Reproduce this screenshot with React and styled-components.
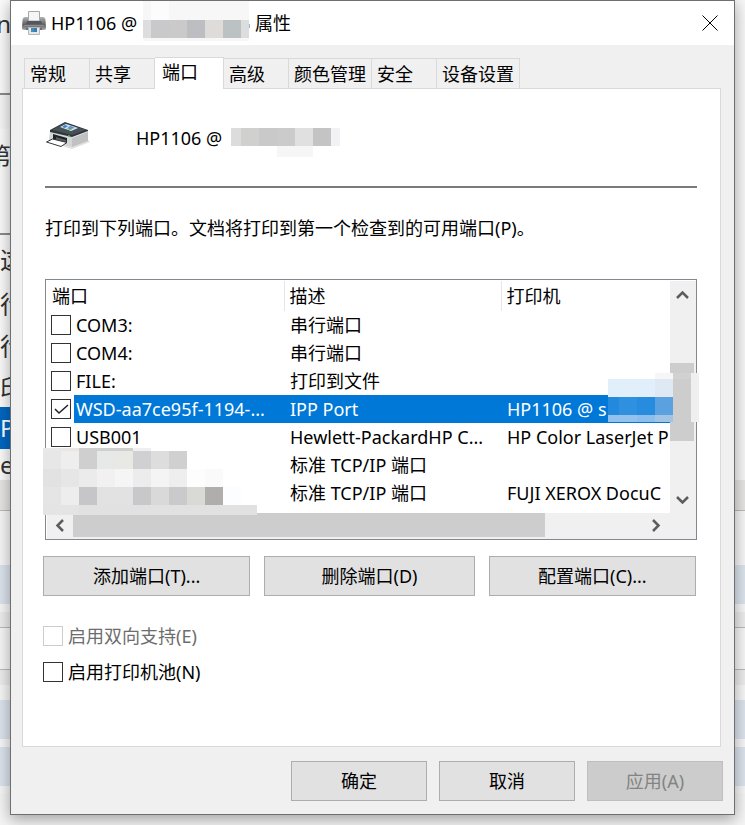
import { useState } from "react";
import styled, { createGlobalStyle } from "styled-components";

const GlobalStyle = createGlobalStyle`
  * {
    box-sizing: border-box;
  }
  body {
    margin: 0;
    color: #000;
    font-family: "Noto Sans", "Noto Sans CJK SC", sans-serif;
    font-size: 18px;
    line-height: 24px;
  }
  button,
  input {
    font: inherit;
    color: inherit;
  }
`;

const StyledPage = styled.div`
  display: grid;
  min-height: 100vh;
  overflow: hidden;
  background-color: #f4f4f4;

  & > * {
    grid-area: 1 / 1;
  }
`;

/* what is open behind the dialog */
const StyledBackdrop = styled.div`
  display: flex;
  flex-direction: column;
`;
const StyledBand = styled.div`
  flex: none;
  height: ${({ $height }) => $height}px;
  background-color: ${({ $color }) => $color || "#f6f6f6"};
  border-bottom: ${({ $line }) => ($line ? "1px solid #b9b9b9" : "none")};
`;
const StyledFragment = styled.span`
  display: flex;
  align-items: center;
  justify-content: ${({ $cut }) => ($cut ? "flex-end" : "flex-start")};
  width: 11px;
  height: 100%;
  overflow: hidden;
  font-size: 24px;
  color: ${({ $selected }) => ($selected ? "#fff" : "#333")};
  background-color: ${({ $selected }) => ($selected ? "#0067c0" : "#fafafa")};
  border-bottom: ${({ $line }) => ($line ? "2px solid #8b8b8b" : "none")};
`;

const StyledDialog = styled.main`
  align-self: start;
  z-index: 1;
  margin: 0 10px 10px;
  background-color: #f0f0f0;
  border: 1px solid #6f6f6f;
  box-shadow: 0 4px 14px rgba(0, 0, 0, 0.35);
`;
const StyledTitleBar = styled.header`
  display: flex;
  align-items: center;
  height: 44px;
  padding: 0 16px 0 11px;
  background-color: #fff;
`;
const StyledTitle = styled.h1`
  display: flex;
  align-items: center;
  flex: 1;
  margin: 0 0 0 5px;
  font-size: 18px;
  font-weight: 400;
`;
const StyledTitleName = styled.span`
  width: 92px;
  white-space: nowrap;
`;
const StyledTitleEnd = styled.span`
  margin-left: 6px;
`;
const StyledCloseButton = styled.button`
  display: flex;
  padding: 0;
  border: none;
  background: none;
`;

const StyledTabs = styled.div`
  display: flex;
  align-items: flex-end;
  margin: 12px 13px 0;
`;
const StyledTab = styled.button`
  height: ${({ $active }) => ($active ? 32 : 30)}px;
  min-width: ${({ $active }) => ($active ? 69 : 65)}px;
  margin-bottom: ${({ $active }) => ($active ? -1 : 0)}px;
  padding: ${({ $active }) => ($active ? "0 7px 3px" : "0 5px")};
  text-align: left;
  white-space: nowrap;
  z-index: 1;
  background-color: ${({ $active }) => ($active ? "#fff" : "#f0f0f0")};
  border: 1px solid #d9d9d9;
  border-width: 1px 1px 0 0;

  &:first-child {
    min-width: 66px;
    border-left-width: 1px;
  }
`;
const StyledPanel = styled.section`
  min-height: 659px;
  margin: 0 13px 0 11px;
  padding: 0 23px 0 22px;
  background-color: #fff;
  border: 1px solid #d9d9d9;
`;
const StyledPrinterHead = styled.div`
  display: flex;
  align-items: center;
  height: 99px;
  border-bottom: 2px solid #7a7a7a;
`;
const StyledPrinterName = styled.span`
  width: 95px;
  margin-left: 46px;
  white-space: nowrap;
`;
const StyledHint = styled.p`
  margin: 28px 0 39px;
`;

const StyledListBox = styled.div`
  position: relative;
  display: grid;
  grid-template-columns: 1fr 26px;
  grid-template-rows: 232px 26px;
  padding: 1px 0 0 1px;
  background-color: #fff;
  border: 1px solid #828790;
`;
const StyledListView = styled.div`
  overflow: hidden;
`;
const StyledTable = styled.table`
  width: 100%;
  table-layout: fixed;
  border-collapse: collapse;
`;
const StyledHeadCell = styled.th`
  width: ${({ $width }) => $width};
  height: 30px;
  padding: 0 5px;
  text-align: left;
  font-weight: 400;
  border-right: ${({ $last }) => ($last ? "none" : "1px solid #e5e5e5")};
`;
const StyledRow = styled.tr`
  height: 28px;
  color: ${({ $selected }) => ($selected ? "#fff" : "inherit")};
  --fill: ${({ $selected }) => ($selected ? "#0078d7" : "transparent")};
`;
const StyledCell = styled.td`
  padding: 0 0 0 6px;
  overflow: hidden;
  white-space: nowrap;
  background-color: var(--fill);
`;
const StyledPortCell = styled.td`
  padding: 0;
`;
const StyledPort = styled.label`
  display: flex;
  align-items: center;
  gap: 3px;
  height: 28px;
  padding-left: 4px;
`;
const StyledPortName = styled.span`
  flex: 1;
  min-width: 0;
  padding: 2px 0 2px 2px;
  white-space: nowrap;
  background-color: var(--fill);
`;

const StyledCheckWrap = styled.span`
  position: relative;
  display: flex;
  flex: none;
  width: 20px;
  height: 20px;

  & > svg {
    position: absolute;
    inset: 0;
    pointer-events: none;
  }
`;
const StyledCheckInput = styled.input`
  appearance: none;
  width: 20px;
  height: 20px;
  margin: 0;
  background-color: #fff;
  border: 1px solid #333;

  &:disabled {
    border-color: #ccc;
  }
`;

const StyledVerticalBar = styled.div`
  display: flex;
  flex-direction: column;
  justify-content: space-between;
  padding-right: 2px;
  background-color: #f0f0f0;
`;
const StyledHorizontalBar = styled.div`
  display: flex;
  justify-content: space-between;
  grid-column: 1 / 3;
  padding: 0 28px 2px 0;
  background-color: #f0f0f0;
`;
const StyledArrow = styled.button`
  display: flex;
  align-items: center;
  justify-content: center;
  flex: none;
  width: ${({ $vertical }) => ($vertical ? "24px" : "26px")};
  height: ${({ $vertical }) => ($vertical ? "28px" : "24px")};
  padding: 0;
  border: none;
  background: none;
`;
const StyledTrack = styled.div`
  display: flex;
  flex: 1;
  flex-direction: ${({ $vertical }) => ($vertical ? "column" : "row")};
`;
const StyledThumb = styled.div`
  flex: 0 0 ${({ $size }) => $size};
  margin-top: ${({ $start }) => $start || 0};
  background-color: #cdcdcd;
`;

const StyledControls = styled.div`
  margin: 16px 1px 0 -2px;
`;
const StyledPortButtons = styled.div`
  display: grid;
  grid-template-columns: 207fr 210fr 207fr;
  gap: 14px;
  margin-bottom: 30px;
`;
const StyledButton = styled.button`
  min-width: 136px;
  height: 40px;
  padding: 0 8px;
  background-color: #e1e1e1;
  border: 1px solid #adadad;

  &:disabled {
    color: #838383;
    background-color: #ccc;
    border-color: #bfbfbf;
  }
`;
const StyledOption = styled.label`
  display: flex;
  align-items: center;
  gap: 5px;
  height: 20px;
  margin-bottom: 16px;
  color: ${({ $disabled }) => ($disabled ? "#6d6d6d" : "inherit")};
`;
const StyledFooter = styled.footer`
  display: flex;
  justify-content: flex-end;
  gap: 12px;
  padding: 14px 11px 13px;
`;

const StyledMosaic = styled.svg`
  display: block;
  flex: none;
`;
const StyledOverlay = styled.div`
  position: absolute;
  left: ${({ $left }) => $left};
  right: ${({ $right }) => $right};
  top: ${({ $top }) => $top};
`;

const bands = [
  { height: 48, text: "n", cut: true },
  { height: 47, text: " ", line: true },
  { height: 34 },
  { height: 54, text: "第", cut: true },
  { height: 52, line: true, text: " " },
  { height: 50, text: "这" },
  { height: 38, text: "行" },
  { height: 46, text: "行" },
  { height: 38, text: "印" },
  { height: 42, text: "P", selected: true },
  { height: 31, text: "e" },
  { height: 31, color: "#e6e5e4", line: true },
  { height: 54 },
  { height: 39, color: "#dbe3ec" },
  { height: 8 },
  { height: 16, color: "#ececec", line: true },
  { height: 42, line: true },
  { height: 15, color: "#ececec" },
  { height: 15 },
  { height: 39, color: "#dbe3ec" },
  { height: 8 },
  { height: 39, color: "#dbe3ec" },
  { height: 7 },
];

const tabs = ["常规", "共享", "端口", "高级", "颜色管理", "安全", "设备设置"];

const initialPorts = [
  { name: "COM3:", desc: "串行端口", printer: "" },
  { name: "COM4:", desc: "串行端口", printer: "" },
  { name: "FILE:", desc: "打印到文件", printer: "" },
  {
    name: "WSD-aa7ce95f-1194-...",
    desc: "IPP Port",
    printer: "HP1106 @ s",
    checked: true,
  },
  {
    name: "USB001",
    desc: "Hewlett-PackardHP C...",
    printer: "HP Color LaserJet P",
  },
  { name: "", desc: "标准 TCP/IP 端口", printer: "" },
  { name: "", desc: "标准 TCP/IP 端口", printer: "FUJI XEROX DocuC" },
];

// blocks: [x, y, width, height, color]
const titleBlocks = [
  [0, 0, 106, 40, "#f7f7f7"],
  [8, 0, 18, 19, "#fcfcfc"],
  [0, 19, 8, 18, "#dddddd"],
  [8, 19, 18, 18, "#c9c9cc"],
  [26, 19, 18, 18, "#ccc9cb"],
  [44, 19, 18, 18, "#bcbec1"],
  [62, 19, 18, 18, "#dfdbd9"],
  [80, 19, 18, 18, "#bcc1c4"],
  [98, 19, 8, 18, "#dddddd"],
  [106, 23, 1, 4, "#8fb8d8"],
];
const nameBlocks = [
  [0, 0, 10, 18, "#dcdcdc"],
  [10, 0, 18, 18, "#d0d0cf"],
  [28, 0, 18, 18, "#c9c9c9"],
  [46, 0, 18, 18, "#cbcbcb"],
  [64, 0, 18, 18, "#dfe0df"],
  [82, 0, 18, 18, "#c4c4c4"],
  [100, 0, 9, 18, "#f2f1f4"],
  [46, 18, 36, 11, "#f6f6f6"],
];
const portBlocks = [
  [0, 0, 18, 3, "#e9e9e9"],
  [18, 0, 18, 3, "#eae6e4"],
  [36, 0, 54, 3, "#cfcfcf"],
  [90, 0, 18, 3, "#f0eeee"],
  [0, 3, 18, 18, "#e7e7e7"],
  [18, 3, 18, 18, "#eeeeee"],
  [36, 3, 18, 18, "#cfcfcf"],
  [54, 3, 18, 18, "#e6e9e7"],
  [72, 3, 18, 18, "#e8e8e5"],
  [90, 3, 18, 18, "#d0d0d2"],
  [108, 3, 18, 18, "#dddddd"],
  [126, 3, 18, 18, "#d0d0d0"],
  [0, 21, 18, 18, "#e2e2e2"],
  [18, 21, 18, 18, "#e6e6e6"],
  [36, 21, 18, 18, "#ebebeb"],
  [54, 21, 18, 18, "#f1f1f1"],
  [72, 21, 18, 18, "#f5f5f5"],
  [90, 21, 18, 18, "#ececec"],
  [108, 21, 18, 18, "#f4f4f4"],
  [126, 21, 18, 18, "#eeeeee"],
  [144, 21, 18, 18, "#fdfdfd"],
  [162, 21, 18, 18, "#fafafa"],
  [0, 39, 18, 18, "#e5e5e5"],
  [18, 39, 18, 18, "#ededed"],
  [36, 39, 18, 18, "#c6c6c8"],
  [54, 39, 36, 18, "#e2e2e2"],
  [90, 39, 18, 18, "#c8c8ca"],
  [108, 39, 18, 18, "#d9d9d9"],
  [126, 39, 18, 18, "#cacacc"],
  [144, 39, 18, 18, "#d9d9d6"],
  [162, 39, 18, 18, "#afaead"],
  [180, 39, 18, 18, "#fcfdff"],
  [0, 57, 36, 10, "#e4e4e4"],
  [36, 57, 178, 10, "#e1e1e1"],
];
const printerBlocks = [
  [47, 0, 18, 6, "#f6f6f6"],
  [65, 0, 18, 6, "#d1d1d1"],
  [0, 6, 47, 18, "#e0eff9"],
  [47, 6, 18, 18, "#dfe9f3"],
  [0, 24, 11, 18, "#2389dd"],
  [11, 24, 18, 18, "#2e90df"],
  [29, 24, 18, 18, "#278cde"],
  [47, 24, 18, 18, "#5ba1df"],
  [0, 42, 29, 7, "#93c2ee"],
  [29, 42, 18, 7, "#8cbeed"],
  [47, 42, 18, 7, "#a1c3e4"],
  [65, 6, 18, 43, "#cdcdcd"],
  [83, 0, 8, 49, "#efefef"],
];

function Mosaic({ width, height, blocks }) {
  return (
    <StyledMosaic
      width={width}
      height={height}
      shapeRendering="crispEdges"
      overflow="visible"
      aria-hidden="true"
    >
      {blocks.map(([x, y, w, h, fill]) => (
        <rect key={`${x}-${y}`} x={x} y={y} width={w} height={h} fill={fill} />
      ))}
    </StyledMosaic>
  );
}

function SmallPrinterIcon() {
  return (
    <svg width="24" height="24" viewBox="0 0 24 24" aria-hidden="true">
      <defs>
        <linearGradient id="body" x1="0" y1="0" x2="0" y2="1">
          <stop offset="0" stopColor="#b4b5b6" />
          <stop offset="0.4" stopColor="#77797b" />
          <stop offset="0.6" stopColor="#5d5f61" />
          <stop offset="1" stopColor="#a8aaac" />
        </linearGradient>
      </defs>
      <path
        d="M3 6h3v4h12V6h3q2 0 2.500 3l.5 8q0 2-2 2H2q-2 0-2-2l.5-8Q1 6 3 6z"
        fill="url(#body)"
      />
      <path d="M6.500.5h11V10h-11z" fill="#f4f5f6" stroke="#a6a8aa" />
      <path d="M5 10h14l1 3H4z" fill="#55585a" />
      <path d="M2 14h20v1H2z" fill="#8a8c8e" />
      <path d="M4 17h16v2H4z" fill="#6b6d6f" />
      <path d="M6.500 16.500h11v7h-11z" fill="#e4e8eb" stroke="#b4b7ba" />
      <path d="M9 17h3v4H9z" fill="#3f95ad" />
      <path d="M12 17h3v4h-3z" fill="#3a78b8" />
    </svg>
  );
}

function LargePrinterIcon() {
  return (
    <svg width="45" height="40" viewBox="0 0 45 40" aria-hidden="true">
      <path d="M3 24l24 7 18-7-2-2z" fill="#e2e2e2" />
      <path d="M5 12l22 6v11l-8-2L4 22z" fill="#d3d5d7" />
      <path d="M27 18l16-6v11l-16 6z" fill="#bfc1c3" />
      <path d="M27 18l16-6v2l-16 6z" fill="#e3e4e5" />
      <path d="M5 12L20 4l23 8v1l-16 6-22-5z" fill="#2f363a" />
      <path d="M7 12l13-7 21 7-14 5z" fill="#485157" />
      <path d="M15 9l6-3 12 4-7 3z" fill="#dbe9f7" />
      <path d="M17 9l3-2 3 1-3 2z" fill="#3f7fc9" />
      <path d="M22 9l4-1 4 2-4 1z" fill="#5f93c8" />
      <path d="M21 11l4-1 2 2z" fill="#3d9a52" />
      <path d="M8 16l14 4v5L8 22z" fill="#1f2326" />
      <path d="M11 19l10 3v2l-10-2z" fill="#565c61" />
      <path d="M1.500 24l6-3L22 24.500l-6 4z" fill="#fff" stroke="#33383c" />
      <path d="M23 17l2 .5v1.500l-2-.5z" fill="#45c04d" />
    </svg>
  );
}

function CheckBox(props) {
  return (
    <StyledCheckWrap>
      <StyledCheckInput type="checkbox" {...props} />
      {props.checked && (
        <svg width="20" height="20" viewBox="0 0 20 20" aria-hidden="true">
          <path
            d="M4 10l4 4 9-8"
            fill="none"
            stroke="#222"
            strokeWidth="1.500"
          />
        </svg>
      )}
    </StyledCheckWrap>
  );
}

const arrowPaths = {
  up: "M1 9l5.500-5.500L12 9",
  down: "M1 4l5.500 5.500L12 4",
  left: "M9 1L3.500 6.500 9 12",
  right: "M4 1l5.500 5.500L4 12",
};

function Arrow({ direction, vertical }) {
  return (
    <StyledArrow type="button" aria-label={direction} $vertical={vertical}>
      <svg width="13" height="13" viewBox="0 0 13 13" aria-hidden="true">
        <path
          d={arrowPaths[direction]}
          fill="none"
          stroke="#5c5c5c"
          strokeWidth="2.500"
        />
      </svg>
    </StyledArrow>
  );
}

function PortList() {
  const [ports, setPorts] = useState(initialPorts);

  const toggle = (index) =>
    setPorts(
      ports.map((port, i) =>
        i === index ? { ...port, checked: !port.checked } : port
      )
    );

  return (
    <StyledListBox>
      <StyledListView>
        <StyledTable>
          <thead>
            <tr>
              <StyledHeadCell $width="237px">端口</StyledHeadCell>
              <StyledHeadCell $width="217px">描述</StyledHeadCell>
              <StyledHeadCell $last>打印机</StyledHeadCell>
            </tr>
          </thead>
          <tbody>
            {ports.map((port, index) => (
              <StyledRow key={index} $selected={index === 3}>
                <StyledPortCell>
                  {port.name && (
                    <StyledPort>
                      <CheckBox
                        checked={!!port.checked}
                        onChange={() => toggle(index)}
                      />
                      <StyledPortName>{port.name}</StyledPortName>
                    </StyledPort>
                  )}
                </StyledPortCell>
                <StyledCell>{port.desc}</StyledCell>
                <StyledCell>{port.printer}</StyledCell>
              </StyledRow>
            ))}
          </tbody>
        </StyledTable>
      </StyledListView>
      <StyledVerticalBar>
        <Arrow direction="up" vertical />
        <StyledTrack $vertical>
          <StyledThumb $size="78px" $start="54px" />
        </StyledTrack>
        <Arrow direction="down" vertical />
      </StyledVerticalBar>
      <StyledHorizontalBar>
        <Arrow direction="left" />
        <StyledTrack>
          <StyledThumb $size="83%" />
        </StyledTrack>
        <Arrow direction="right" />
      </StyledHorizontalBar>
      <StyledOverlay $left="-3px" $top="168px">
        <Mosaic width={214} height={67} blocks={portBlocks} />
      </StyledOverlay>
      <StyledOverlay $right="-3px" $top="93px">
        <Mosaic width={91} height={49} blocks={printerBlocks} />
      </StyledOverlay>
    </StyledListBox>
  );
}

function App() {
  const [activeTab, setActiveTab] = useState("端口");
  const [pooling, setPooling] = useState(false);

  return (
    <StyledPage>
      <GlobalStyle />
      <StyledBackdrop aria-hidden="true">
        {bands.map(({ height, color, text, cut, selected, line }, index) => (
          <StyledBand
            key={index}
            $height={height}
            $color={color}
            $line={line && !text}
          >
            {text && (
              <StyledFragment $cut={cut} $selected={selected} $line={line}>
                {text}
              </StyledFragment>
            )}
          </StyledBand>
        ))}
      </StyledBackdrop>
      <StyledDialog>
        <StyledTitleBar>
          <SmallPrinterIcon />
          <StyledTitle>
            <StyledTitleName>HP1106 @</StyledTitleName>
            <Mosaic width={106} height={44} blocks={titleBlocks} />
            <StyledTitleEnd>属性</StyledTitleEnd>
          </StyledTitle>
          <StyledCloseButton type="button" aria-label="关闭">
            <svg width="16" height="16" viewBox="0 0 16 16" aria-hidden="true">
              <path d="M.5.5l15 15M15.500.5l-15 15" stroke="#000" />
            </svg>
          </StyledCloseButton>
        </StyledTitleBar>
        <StyledTabs role="tablist">
          {tabs.map((tab) => (
            <StyledTab
              key={tab}
              type="button"
              role="tab"
              aria-selected={tab === activeTab}
              $active={tab === activeTab}
              onClick={() => setActiveTab(tab)}
            >
              {tab}
            </StyledTab>
          ))}
        </StyledTabs>
        <StyledPanel role="tabpanel">
          <StyledPrinterHead>
            <LargePrinterIcon />
            <StyledPrinterName>HP1106 @</StyledPrinterName>
            <Mosaic width={109} height={20} blocks={nameBlocks} />
          </StyledPrinterHead>
          <StyledHint>
            打印到下列端口。文档将打印到第一个检查到的可用端口(P)。
          </StyledHint>
          <PortList />
          <StyledControls>
            <StyledPortButtons>
              <StyledButton type="button">添加端口(T)...</StyledButton>
              <StyledButton type="button">删除端口(D)</StyledButton>
              <StyledButton type="button">配置端口(C)...</StyledButton>
            </StyledPortButtons>
            <StyledOption $disabled>
              <CheckBox disabled />
              启用双向支持(E)
            </StyledOption>
            <StyledOption>
              <CheckBox
                checked={pooling}
                onChange={(e) => setPooling(e.target.checked)}
              />
              启用打印机池(N)
            </StyledOption>
          </StyledControls>
        </StyledPanel>
        <StyledFooter>
          <StyledButton type="button">确定</StyledButton>
          <StyledButton type="button">取消</StyledButton>
          <StyledButton type="button" disabled>
            应用(A)
          </StyledButton>
        </StyledFooter>
      </StyledDialog>
    </StyledPage>
  );
}

export default App;
